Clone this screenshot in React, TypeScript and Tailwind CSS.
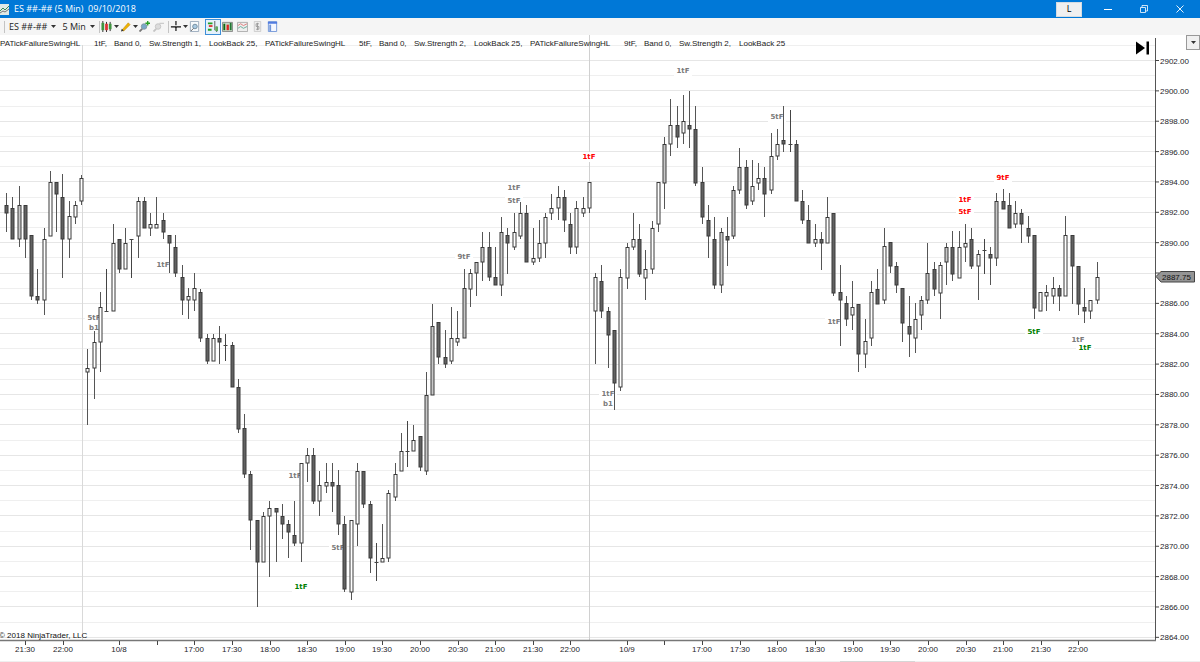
import React from "react";

type Bar = [number, number, number, number, string];

// high, body top, body bottom, low; kind: f = filled, h = hollow, g = shaded, d = doji
const BARS: Bar[] = [
  [193,205,213,232,"f"],[197,208,239,239,"f"],[186,205,239,247,"g"],[205,205,239,258,"f"],[235,235,296,300,"f"],
  [269,296,300,304,"f"],[228,239,300,315,"h"],[171,182,236,236,"h"],[182,182,194,232,"f"],[174,197,239,278,"f"],
  [201,216,239,258,"h"],[201,205,217,224,"h"],[175,178,201,205,"h"],[349,368,372,425,"h"],[331,342,368,399,"h"],
  [292,307,342,372,"h"],[269,311,311,312,"d"],[224,243,311,311,"h"],[239,239,269,273,"f"],[228,243,269,269,"h"],
  [239,239,239,278,"d"],[197,201,236,258,"h"],[197,201,228,228,"f"],[213,224,228,236,"h"],[197,224,228,228,"h"],
  [213,220,232,239,"f"],[235,235,243,273,"f"],[235,247,273,277,"f"],[265,277,300,315,"f"],[288,296,300,319,"h"],
  [273,288,300,311,"h"],[289,292,338,342,"f"],[334,338,361,364,"f"],[334,338,361,361,"h"],[326,338,342,364,"f"],
  [334,345,345,361,"d"],[342,345,387,387,"f"],[379,387,429,433,"f"],[414,428,474,478,"f"],[471,474,520,550,"f"],
  [520,520,562,607,"f"],[512,516,562,562,"h"],[501,508,516,577,"h"],[508,508,512,562,"f"],[504,516,524,539,"f"],
  [520,524,532,558,"f"],[501,535,543,546,"f"],[463,463,543,562,"h"],[448,455,463,482,"h"],[448,455,501,504,"f"],
  [471,485,501,516,"h"],[463,482,486,493,"h"],[463,482,486,512,"f"],[470,485,524,535,"f"],[516,524,589,592,"f"],
  [520,520,592,600,"h"],[463,471,524,546,"h"],[471,471,504,508,"f"],[501,504,558,573,"f"],[543,562,562,581,"d"],
  [524,558,562,562,"h"],[490,493,558,562,"h"],[463,474,497,501,"h"],[433,451,471,471,"h"],[421,451,451,467,"d"],
  [425,440,451,451,"h"],[436,436,467,471,"f"],[372,395,471,475,"g"],[304,326,395,395,"g"],[322,322,357,364,"f"],
  [330,357,364,368,"f"],[307,338,361,364,"h"],[311,338,342,346,"h"],[269,288,338,338,"g"],[269,273,289,307,"h"],
  [262,262,273,296,"g"],[232,247,262,281,"g"],[232,247,277,281,"f"],[247,277,285,285,"f"],[217,232,285,296,"g"],
  [228,235,243,274,"f"],[213,232,247,250,"h"],[202,213,236,239,"h"],[205,213,262,262,"f"],[228,258,262,265,"h"],
  [220,243,258,262,"h"],[213,217,243,258,"h"],[194,208,213,220,"h"],[186,197,208,220,"h"],[190,197,220,232,"f"],
  [213,224,247,254,"f"],[201,208,247,254,"h"],[197,208,213,217,"h"],[182,182,208,213,"h"],[273,277,311,364,"h"],
  [265,281,311,318,"f"],[307,311,335,368,"f"],[330,330,383,410,"f"],[269,277,387,391,"h"],[243,247,278,289,"h"],
  [213,239,247,250,"h"],[224,239,274,277,"f"],[250,269,278,300,"h"],[221,228,269,274,"h"],[182,182,224,232,"h"],
  [137,144,183,209,"g"],[99,125,144,156,"h"],[106,125,137,148,"f"],[95,121,133,144,"h"],[91,125,129,148,"f"],
  [106,129,183,186,"f"],[167,182,217,224,"f"],[205,220,236,258,"f"],[217,239,285,289,"f"],[228,232,285,293,"g"],
  [217,236,240,266,"f"],[186,190,236,239,"g"],[148,167,190,194,"g"],[160,167,205,209,"f"],[160,186,201,205,"h"],
  [163,178,183,190,"h"],[167,178,194,217,"f"],[133,156,190,194,"h"],[129,144,156,160,"h"],[106,140,144,152,"f"],
  [110,144,144,152,"d"],[140,144,201,201,"f"],[190,201,220,224,"f"],[205,220,243,243,"f"],[224,239,243,247,"h"],
  [232,239,243,270,"f"],[197,217,243,243,"h"],[213,213,293,296,"f"],[265,292,300,346,"f"],[296,303,319,326,"f"],
  [281,307,315,330,"h"],[304,304,354,372,"f"],[319,341,354,368,"h"],[281,292,338,346,"h"],[269,289,304,304,"f"],
  [228,246,300,304,"h"],[242,242,266,273,"f"],[262,266,285,293,"f"],[288,288,323,342,"f"],[296,326,334,357,"f"],
  [303,319,338,353,"h"],[296,300,315,330,"g"],[243,273,300,304,"g"],[262,269,289,296,"f"],[262,265,293,319,"h"],
  [243,247,262,285,"g"],[231,247,274,281,"f"],[231,247,278,278,"h"],[224,243,247,262,"h"],[228,239,266,269,"f"],
  [250,254,266,300,"h"],[239,250,250,274,"d"],[247,254,258,285,"f"],[193,201,258,266,"g"],[189,201,209,209,"f"],
  [193,205,228,228,"f"],[201,213,224,228,"h"],[209,213,224,243,"f"],[216,228,236,243,"f"],[235,235,308,319,"f"],
  [292,292,311,311,"h"],[285,292,296,311,"h"],[277,288,296,304,"h"],[285,288,296,311,"f"],[216,235,296,296,"h"],
  [235,235,266,304,"f"],[266,266,304,315,"f"],[288,307,311,323,"f"],[300,300,311,319,"h"],[262,277,300,304,"h"],
];

const GRAY = "#7a7a7a";
const RED = "#ff0000";
const GREEN = "#008000";

const MARKS: [number, number, string, string][] = [
  [94,318,"5tF",GRAY],[94,328,"b1",GRAY],[163,265,"1tF",GRAY],[295,476,"1tF",GRAY],[301,587,"1tF",GREEN],
  [338,548,"5tF",GRAY],[464,257,"9tF",GRAY],[514,188,"1tF",GRAY],[514,201,"5tF",GRAY],[589,157,"1tF",RED],
  [608,394,"1tF",GRAY],[608,404,"b1",GRAY],[683,71,"1tF",GRAY],[777,117,"5tF",GRAY],[834,322,"1tF",GRAY],
  [965,200,"1tF",RED],[965,212,"5tF",RED],[1003,178,"9tF",RED],[1034,332,"5tF",GREEN],[1078,340,"1tF",GRAY],
  [1085,348,"1tF",GREEN],
];

const TIMES: [number, string][] = [
  [25,"21:30"],[63,"22:00"],[119,"10/8"],[157,""],[194,"17:00"],[232,"17:30"],[270,"18:00"],[307,"18:30"],[345,"19:00"],
  [382,"19:30"],[420,"20:00"],[458,"20:30"],[495,"21:00"],[533,"21:30"],[570,"22:00"],[627,"10/9"],[664,""],[702,"17:00"],
  [740,"17:30"],[777,"18:00"],[815,"18:30"],[853,"19:00"],[890,"19:30"],[928,"20:00"],[966,"20:30"],[1003,"21:00"],
  [1041,"21:30"],[1078,"22:00"],
];

const INDICATORS = [
  ["1tF,", "Sw.Strength 1,", "LookBack 25,"],
  ["5tF,", "Sw.Strength 2,", "LookBack 25,"],
  ["9tF,", "Sw.Strength 2,", "LookBack 25"],
];

const priceY = (p: number) => 60.5 + (2902 - p) * 15.18;
const barX = (i: number) => Math.round(6.5 + i * 6.268 - 0.5) + 0.5;

function Candle({ bar, x }: { bar: Bar; x: number }) {
  const [high, top, bottom, low, kind] = bar;
  if (kind === "d") {
    return (
      <g stroke="#444">
        <line x1={x} x2={x} y1={high} y2={low} />
        <line x1={x - 2} x2={x + 2} y1={top + 0.5} y2={top + 0.5} />
      </g>
    );
  }
  const fill = kind === "f" ? "#626262" : kind === "g" ? "#c8c8c8" : "#fff";
  return (
    <g stroke="#3a3a3a">
      <line x1={x} x2={x} y1={high} y2={low} stroke="#555" />
      <rect x={x - 1.5} y={top + 0.5} width={3} height={Math.max(bottom - top - 0.5, 1)} fill={fill} />
    </g>
  );
}

function Chart() {
  const levels = Array.from({ length: 40 }, (_, i) => 2903 - i);
  return (
    <svg
      viewBox="0 35 1200 627"
      className="block w-full"
      role="img"
      aria-label="ES five minute candlestick chart"
      fontFamily="'Liberation Sans', Arial, sans-serif"
      fontSize="8"
    >
      <g shapeRendering="crispEdges">
        {levels.map((p) => (
          <line key={p} x1="0" x2="1155" y1={priceY(p)} y2={priceY(p)} stroke={p % 2 ? "#efefef" : "#e6e6e6"} />
        ))}
        <line x1="82" x2="82" y1="45" y2="640" stroke="#d9d9d9" />
        <line x1="589.5" x2="589.5" y1="35" y2="640" stroke="#d0d0d0" />
        <line x1="0" x2="1200" y1="661.5" y2="661.5" stroke="#efefef" />
        <line x1="840" x2="915" y1="661.5" y2="661.5" stroke="#d6d6d6" />
      </g>
      {MARKS.map(([x, y, t], i) => (
        <rect key={i} x={x - (t === "b1" ? 7 : 9)} y={y - 5} width={t === "b1" ? 14 : 18} height="10" fill="#fff" />
      ))}
      {MARKS.map(([x, y, t, c], i) => (
        <text key={i} x={x} y={y + 2} fill={c} fontSize="7" fontWeight="700" textAnchor="middle" fontFamily="'DejaVu Sans', Verdana, sans-serif">
          {t}
        </text>
      ))}
      {BARS.map((b, i) => (
        <Candle key={i} bar={b} x={barX(i)} />
      ))}

      <path d="M1136 41.5l9 6.5-9 6.5z" fill="#000" />
      <rect x="1146.5" y="41.5" width="2.5" height="13" fill="#000" />

      <path d="M1155.500 38V640.500" stroke="#555" fill="none" />
      <path d="M0 640.500H1156" stroke="#777" strokeWidth="1.500" fill="none" />
      {levels.filter((p) => p % 2 === 0).map((p) => (
        <g key={p}>
          <line x1="1155" x2="1159" y1={priceY(p)} y2={priceY(p)} stroke="#444" />
          <text x="1160" y={priceY(p) + 3} fill="#241c2a">{p}.00</text>
        </g>
      ))}
      <path d="M1156 276.500l5-5h33.500v10.500h-33.500z" fill="#949494" stroke="#444" />
      <text x="1162" y="280" fill="#111">2887.75</text>

      {TIMES.map(([x, t], i) => (
        <g key={i}>
          <line x1={x + 0.5} x2={x + 0.5} y1="641" y2="645" stroke="#444" />
          {t && <text x={x} y="652" fill="#241c2a" textAnchor="middle">{t}</text>}
        </g>
      ))}
      <text x="-1" y="638" fill="#111">© 2018 NinjaTrader, LLC</text>
    </svg>
  );
}

const Caret = () => (
  <svg viewBox="0 0 5 3" className="h-[3px] w-[5px] shrink-0" aria-hidden="true"><path d="M0 0h5L2.500 3z" fill="#333" /></svg>
);

const Magnifier = ({ color = "#78a8c8" }: { color?: string }) => (
  <>
    <circle cx="5.500" cy="6" r="3" fill={color} stroke={color === "#78a8c8" ? "#8296a3" : "#c4c4c4"} />
    <path d="M3.500 8.500L0.500 11.500" stroke={color === "#78a8c8" ? "#777" : "#c4c4c4"} strokeWidth="2" />
  </>
);

function ToolIcon({ name, active, children }: { name: string; active?: boolean; children: React.ReactNode }) {
  return (
    <button
      type="button"
      aria-label={name}
      className={`flex h-[14px] w-[14px] shrink-0 items-center justify-center ${active ? "bg-[#e5f1fb] outline outline-[#3c8fd8]" : ""}`}
    >
      <svg viewBox="0 0 12 12" className="h-[11px] w-[11px]" fill="none">{children}</svg>
    </button>
  );
}

const Divider = () => <span className="h-3 w-px shrink-0 bg-[#c4c4c4]" />;

export default function App() {
  return (
    <main className="relative w-full overflow-hidden bg-white font-['Open_Sans','Noto_Sans',sans-serif] text-[#1b1b1b]">
      <header className="flex h-[18px] items-center bg-[#0078d7] pr-0.5 text-white">
        <svg viewBox="0 0 10 11" className="h-[11px] w-[10px] shrink-0" aria-hidden="true">
          <path d="M0 0h9v11H0z" fill="#dfe9e6" />
          <path d="M0 7l3-3 2 2 4-4" stroke="#398a55" fill="none" />
          <path d="M0 9l3-2 2 1 4-3" stroke="#777" fill="none" />
        </svg>
        <h1 className="ml-1 flex-1 text-[9px] leading-[18px] whitespace-pre">ES ##-## (5 Min)  09/10/2018</h1>
        <button type="button" className="h-[15px] w-[26px] border border-[#d5dce2] bg-[#f0f0f0] text-[9px] leading-3 text-black">L</button>
        <div className="ml-2 flex h-full">
          <button type="button" aria-label="Minimize" className="flex w-9 items-center justify-center">
            <svg viewBox="0 0 8 8" className="h-2 w-2"><path d="M0 4.500h8" stroke="#fff" /></svg>
          </button>
          <button type="button" aria-label="Restore" className="flex w-9 items-center justify-center">
            <svg viewBox="0 0 8 8" className="h-2 w-2" fill="none" stroke="#fff" strokeWidth="0.8"><path d="M.500 2.500h5v5h-5zM2 2.500V.500h5.500V6H5.500" /></svg>
          </button>
          <button type="button" aria-label="Close" className="flex w-9 items-center justify-center">
            <svg viewBox="0 0 8 8" className="h-2 w-2"><path d="M.500.500l7 7M7.500.500l-7 7" stroke="#fff" strokeWidth="0.9" /></svg>
          </button>
        </div>
      </header>

      <nav aria-label="Chart tools" className="flex h-[17px] items-center bg-[#f5f5f5] pl-1">
        <Divider />
        <button type="button" className="ml-1 flex items-center gap-1 text-[9px] leading-4">ES ##-## <Caret /></button>
        <button type="button" className="ml-1.5 flex items-center gap-1 text-[9px] leading-4">5 Min <Caret /></button>
        <span className="ml-1 flex items-center">
          <Divider />
          <ToolIcon name="Chart style"><path d="M2 0v12M6 1v11M10 1v10" stroke="#222" /><path d="M.500 2h3v8h-3z" fill="#3f963f" /><path d="M4.500 3h3v7h-3z" fill="#d33" /><path d="M8.500 3h3v6h-3z" fill="#3f963f" /></ToolIcon>
          <Caret />
          <ToolIcon name="Drawing tools"><path d="M2 10l7-8 2 2-7 7z" fill="#f0b400" stroke="#b9820a" strokeWidth="0.6" /><path d="M1 11.500l1-3 2 2z" fill="#333" /></ToolIcon>
          <Caret />
          <ToolIcon name="Zoom in"><Magnifier /><path d="M9.500 0v5M7 2.500h5" stroke="#25a025" strokeWidth="1.500" /></ToolIcon>
          <ToolIcon name="Zoom out"><Magnifier color="#dcdcdc" /><path d="M7 2.500h5" stroke="#bbb" /></ToolIcon>
        </span>
        <span className="ml-0.5 flex items-center">
          <Divider />
          <ToolIcon name="Cursor"><path d="M6.500 0v12M1 6.500h11" stroke="#111" strokeWidth="1.300" strokeDasharray="4.500 2" /><circle cx="6.500" cy="6.500" r="1" fill="#111" /></ToolIcon>
          <Caret />
          <ToolIcon name="Data box"><path d="M1.500.500h9v11h-9z" fill="#f7fafc" stroke="#9ab" /><circle cx="6.500" cy="6" r="2.500" fill="#a9cae2" stroke="#70899b" /><path d="M5 8l-3 3" stroke="#666" /></ToolIcon>
        </span>
        <span className="ml-1 flex items-center gap-px">
          <ToolIcon name="Chart trader" active><path d="M1 2.500h5M1 9.500h4" stroke="#25a025" strokeWidth="2" /><path d="M2 5.500h4" stroke="#d33" strokeWidth="2" /><path d="M8.500 0v10M10.500 6v6" stroke="#555" /><path d="M9 6h3v5H9z" fill="#62a962" /></ToolIcon>
          <ToolIcon name="Data series"><path d="M.500 1.500h11v10H.500z" fill="#c6d8c6" stroke="#888" /><path d="M1.500 3h2v7h-2z" fill="#161" /><path d="M5 4h2.500v6H5z" fill="#d22" /><path d="M8.500 2h2v8h-2z" fill="#273" /></ToolIcon>
          <ToolIcon name="Indicators"><path d="M.500 1.500h11v10H.500z" fill="#eee" stroke="#aaa" /><path d="M1 5l3-2 3 2 4-2" stroke="#d77" /><path d="M1 8l3-2 3 2 4-2" stroke="#6a9" /></ToolIcon>
          <ToolIcon name="Strategies"><path d="M2.500.500h7v11h-7z" fill="#ededed" stroke="#ccc" /><path d="M7.500 3h-3v3h3v3h-3M6 2v8" stroke="#999" /></ToolIcon>
          <ToolIcon name="Properties"><path d="M1.500.500h9v11h-9z" fill="#f4f7ff" stroke="#7095d8" /><path d="M1 1h10v2H1z" fill="#517be0" /><path d="M3.500 4v7" stroke="#7095d8" strokeWidth="2" /></ToolIcon>
        </span>
      </nav>

      <section className="relative">
        <Chart />
        <div className="absolute top-[3px] left-0 flex text-[8px] leading-3 whitespace-nowrap font-['Liberation_Sans',Arial,sans-serif]">
          {INDICATORS.map(([tick, swing, look]) => (
            <p key={tick} className="flex">
              <span className="w-[94px]">PATickFailureSwingHL</span>
              <span className="w-5">{tick}</span>
              <span className="w-[35px]">Band 0,</span>
              <span className="w-[60px]">{swing}</span>
              <span className="w-14">{look}</span>
            </p>
          ))}
        </div>
        <button type="button" aria-label="Panel menu" className="absolute top-0 right-0 flex h-[15px] w-[14px] items-center justify-center border border-[#999] bg-[#f0f0f0]">
          <Caret />
        </button>
      </section>
    </main>
  );
}
